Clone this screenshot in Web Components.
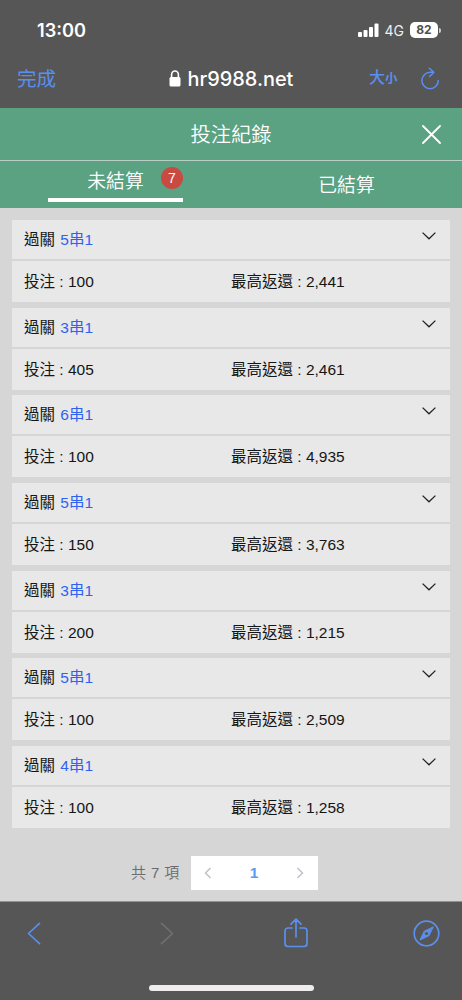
<!DOCTYPE html>
<html lang="zh-Hant">
<head>
<meta charset="utf-8">
<meta name="viewport" content="width=device-width, initial-scale=1">
<title>投注紀錄</title>
<style>
  body {
    margin: 0;
    background: #565656;
    font-family: "Liberation Sans", "Noto Sans CJK TC", sans-serif;
  }
</style>
</head>
<body>
<bet-app></bet-app>
<script>
class StatusBar extends HTMLElement {
  constructor() {
    super();
    this.attachShadow({ mode: 'open' });
  }
  connectedCallback() {
    this.shadowRoot.innerHTML = `
      <style>
        :host {
          display: flex;
          align-items: center;
          justify-content: space-between;
          height: 60px;
          padding: 0 21px 0 37px;
          box-sizing: border-box;
          color: #fff;
          font-family: Inter, sans-serif;
        }
        .time { font-size: 18.2px; font-weight: 600; }
        .right { display: flex; align-items: center; }
        .net { font-size: 14px; margin: 0 6px 0 6px; color: #eee; letter-spacing: 0; }
        .battery {
          width: 28px;
          height: 16px;
          border-radius: 5px;
          background: #fff;
          color: #505050;
          font-size: 12px;
          font-weight: 700;
          line-height: 16px;
          text-align: center;
        }
        .cap { width: 2px; height: 5px; margin-left: 1px; border-radius: 0 2px 2px 0; background: #ccc; }
      </style>
      <span class="time"><slot></slot></span>
      <div class="right">
        <svg width="21" height="14" viewBox="0 0 21 14" fill="#fff">
          <rect x="0" y="9" width="4" height="5" rx="1"/>
          <rect x="5.5" y="7" width="4" height="7" rx="1"/>
          <rect x="11" y="4" width="4" height="10" rx="1"/>
          <rect x="16.5" y="0.5" width="4" height="13.5" rx="1"/>
        </svg>
        <span class="net">${this.getAttribute('network')}</span>
        <span class="battery">${this.getAttribute('battery')}</span>
        <span class="cap"></span>
      </div>
    `;
  }
}
customElements.define('status-bar', StatusBar);

class AddressBar extends HTMLElement {
  constructor() {
    super();
    this.attachShadow({ mode: 'open' });
  }
  connectedCallback() {
    this.shadowRoot.innerHTML = `
      <style>
        :host {
          display: grid;
          grid-template-columns: 110px 1fr 110px;
          align-items: center;
          height: 48px;
          padding-bottom: 11px;
          box-sizing: border-box;
          color: #5a8ff0;
        }
        .done { padding-left: 17px; font-size: 19.5px; line-height: 36px; }
        .url {
          display: flex;
          align-items: center;
          justify-content: center;
          gap: 7px;
          color: #fff;
          font: 500 19.9px/36px Inter, sans-serif;
        }
        .tools { display: flex; align-items: center; padding-left: 17px; }
        .size { font-size: 16px; font-weight: 500; line-height: 36px; white-space: nowrap; }
        small { font-size: 12.5px; font-weight: 700; }
        .tools svg { margin-left: 22px; flex: none; }
      </style>
      <span class="done">完成</span>
      <div class="url">
        <svg width="12" height="17" viewBox="0 0 12 17">
          <path d="M2.6 8V4.7a3.4 3.7 0 0 1 6.8 0V8" fill="none" stroke="#fff" stroke-width="1.6"/>
          <rect x="0.5" y="7" width="11" height="9.5" rx="1.5" fill="#fff"/>
        </svg>
        <span><slot></slot></span>
      </div>
      <div class="tools">
        <span class="size">大<small>小</small></span>
        <svg width="20" height="24" viewBox="0 0 20 24" fill="none" stroke="#5a8ff0" stroke-width="1.5" stroke-linecap="round" stroke-linejoin="round">
          <path d="M18.3 13.5a8.2 8.2 0 1 1-8.2-8.2h3.4M9.3 1.2l4.6 4.1L9.6 9.5"/>
        </svg>
      </div>
    `;
  }
}
customElements.define('address-bar', AddressBar);

class PageTitle extends HTMLElement {
  constructor() {
    super();
    this.attachShadow({ mode: 'open' });
  }
  connectedCallback() {
    this.shadowRoot.innerHTML = `
      <style>
        :host {
          display: grid;
          grid-template-columns: 60px 1fr 60px;
          align-items: center;
          height: 53px;
          box-sizing: border-box;
          border-bottom: 1px solid #b7cfc4;
          background: #5ba283;
          color: #fff;
          font-weight: 350;
        }
        .title { grid-column: 2; text-align: center; font-size: 20.3px; line-height: 54px; }
        svg { margin: 0 0 2px 20px; }
      </style>
      <span class="title"><slot></slot></span>
      <svg width="19" height="19" viewBox="0 0 19 19" stroke="#fff" stroke-width="1.8" stroke-linecap="round">
        <path d="M1 1l17 17M18 1L1 18"/>
      </svg>
    `;
  }
}
customElements.define('page-title', PageTitle);

class TabItem extends HTMLElement {
  constructor() {
    super();
    this.attachShadow({ mode: 'open' });
  }
  connectedCallback() {
    const count = this.getAttribute('count');
    this.shadowRoot.innerHTML = `
      <style>
        :host {
          display: flex;
          flex: 1;
          justify-content: center;
          height: 47px;
          color: #fff;
          font-size: 18.8px;
          font-weight: 350;
          line-height: 49px;
        }
        :host([active]) { line-height: 42px; }
        .label { position: relative; box-sizing: border-box; width: 135px; text-align: center; }
        :host([active]) .label { height: 41px; border-bottom: 4px solid #fff; }
        .count {
          position: absolute;
          top: 6px;
          right: 0;
          width: 22px;
          height: 22px;
          border-radius: 50%;
          background: #c94a40;
          font-size: 14px;
          font-weight: 400;
          line-height: 22px;
        }
      </style>
      <div class="label">
        <slot></slot>
        ${count ? `<span class="count">${count}</span>` : ''}
      </div>
    `;
  }
}
customElements.define('tab-item', TabItem);

class BetCard extends HTMLElement {
  constructor() {
    super();
    this.attachShadow({ mode: 'open' });
  }
  connectedCallback() {
    this.shadowRoot.innerHTML = `
      <style>
        :host { display: block; height: 82px; background: #e8e8e8; color: #151515; font-size: 15.5px; }
        .head {
          display: flex;
          justify-content: space-between;
          height: 41px;
          padding: 0 14px 0 12px;
          box-sizing: border-box;
          border-bottom: 2px solid #d6d6d6;
          line-height: 40px;
        }
        b { font-weight: 400; color: #2f62f0; margin-left: 1px; }
        svg { margin-top: 12px; }
        .body { display: grid; grid-template-columns: 207px 1fr; padding-left: 12px; line-height: 41px; }
      </style>
      <div class="head">
        <span>過關 <b>${this.getAttribute('combo')}</b></span>
        <svg width="14" height="8" viewBox="0 0 14 8" fill="none" stroke="#222" stroke-width="1.3">
          <path d="M0.6 0.6L7 6.8l6.4-6.2"/>
        </svg>
      </div>
      <div class="body">
        <span>投注 : ${this.getAttribute('stake')}</span>
        <span>最高返還 : ${this.getAttribute('payout')}</span>
      </div>
    `;
  }
}
customElements.define('bet-card', BetCard);

class PageNav extends HTMLElement {
  constructor() {
    super();
    this.attachShadow({ mode: 'open' });
  }
  connectedCallback() {
    this.shadowRoot.innerHTML = `
      <style>
        :host { display: flex; align-items: center; padding-left: 131px; height: 34px; }
        .total { width: 60px; color: #6a6b6e; font-size: 15px; font-weight: 350; word-spacing: 0.8px; line-height: 34px; white-space: nowrap; }
        .pages {
          display: flex;
          align-items: center;
          justify-content: space-between;
          width: 127px;
          height: 34px;
          padding: 0 14px 0 13px;
          box-sizing: border-box;
          background: #fff;
          color: #5b9bf8;
          font-size: 15.5px;
          font-weight: 700;
        }
      </style>
      <span class="total">共 ${this.getAttribute('total')} 項</span>
      <div class="pages">
        <svg width="8" height="12" viewBox="0 0 8 12" fill="none" stroke="#bfc2c9" stroke-width="1.5"><path d="M6.5 1L1.5 6l5 5"/></svg>
        <span>1</span>
        <svg width="8" height="12" viewBox="0 0 8 12" fill="none" stroke="#bfc2c9" stroke-width="1.5"><path d="M1.5 1l5 5-5 5"/></svg>
      </div>
    `;
  }
}
customElements.define('page-nav', PageNav);

class BrowserToolbar extends HTMLElement {
  constructor() {
    super();
    this.attachShadow({ mode: 'open' });
  }
  connectedCallback() {
    this.shadowRoot.innerHTML = `
      <style>
        :host {
          display: flex;
          flex-direction: column;
          justify-content: space-between;
          height: 99px;
          padding-bottom: 9px;
          box-sizing: border-box;
          border-top: 1px solid #929292;
        }
        .icons {
          display: grid;
          grid-template-columns: 133px 124px 1fr auto;
          align-items: center;
          padding: 16px 22px 0 27px;
        }
        svg { display: block; fill: none; stroke: #5a8ff0; stroke-width: 1.7; stroke-linecap: round; stroke-linejoin: round; }
        .next { stroke: #707070; }
        .home { width: 165px; height: 6px; border-radius: 3px; background: #eeeced; margin-left: 149px; }
      </style>
      <div class="icons">
        <svg width="14" height="23" viewBox="0 0 14 23"><path d="M12.5 1.3L1.5 11.5l11 10.2"/></svg>
        <svg class="next" width="14" height="23" viewBox="0 0 14 23"><path d="M1.5 1.3l11 10.2-11 10.2"/></svg>
        <svg width="24" height="30" viewBox="0 0 24 30">
          <path d="M8 10H4a3 3 0 0 0-3 3v12.5a3 3 0 0 0 3 3h16a3 3 0 0 0 3-3V13a3 3 0 0 0-3-3h-4M12 19V1.5M7 6.2l5-5 5 5"/>
        </svg>
        <svg width="27" height="27" viewBox="0 0 27 27">
          <circle cx="13.5" cy="13.5" r="12.3"/>
          <path d="M20 7L11.2 11.2 7 20l8.8-4.2z" fill="#5a8ff0" stroke-width="1"/>
          <circle cx="13.5" cy="13.5" r="1.6" fill="#565656" stroke="none"/>
        </svg>
      </div>
      <div class="home"></div>
    `;
  }
}
customElements.define('browser-toolbar', BrowserToolbar);

class BetApp extends HTMLElement {
  constructor() {
    super();
    this.attachShadow({ mode: 'open' });
    this.bets = [
      { combo: '5串1', stake: '100', payout: '2,441' },
      { combo: '3串1', stake: '405', payout: '2,461' },
      { combo: '6串1', stake: '100', payout: '4,935' },
      { combo: '5串1', stake: '150', payout: '3,763' },
      { combo: '3串1', stake: '200', payout: '1,215' },
      { combo: '5串1', stake: '100', payout: '2,509' },
      { combo: '4串1', stake: '100', payout: '1,258' }
    ];
  }
  connectedCallback() {
    let cardsHTML = '';
    this.bets.forEach(bet => {
      cardsHTML += `
        <bet-card combo="${bet.combo}" stake="${bet.stake}" payout="${bet.payout}"></bet-card>
      `;
    });
    this.shadowRoot.innerHTML = `
      <style>
        :host { display: flex; flex-direction: column; height: 1000px; overflow: hidden; }
        nav { display: flex; background: #5ba283; }
        main { flex: 1; background: #d6d6d6; }
        .list { display: flex; flex-direction: column; gap: 5.65px; padding: 12px 12px 28px; }
      </style>
      <status-bar network="4G" battery="82">13:00</status-bar>
      <address-bar>hr9988.net</address-bar>
      <page-title>投注紀錄</page-title>
      <nav>
        <tab-item active count="7">未結算</tab-item>
        <tab-item>已結算</tab-item>
      </nav>
      <main>
        <div class="list">${cardsHTML}</div>
        <page-nav total="7"></page-nav>
      </main>
      <browser-toolbar></browser-toolbar>
    `;
  }
}
customElements.define('bet-app', BetApp);
</script>
</body>
</html>
